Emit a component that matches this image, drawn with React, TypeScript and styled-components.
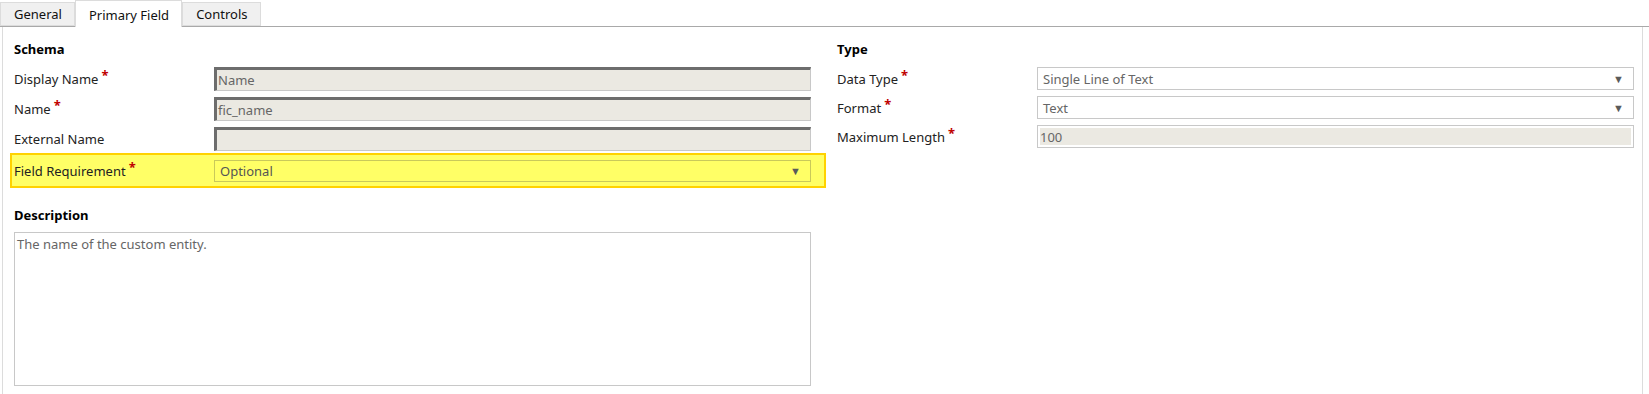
import React from 'react'
import styled, { createGlobalStyle } from 'styled-components'

const GlobalStyle = createGlobalStyle`
    html, body { margin: 0; padding: 0; background: #fff; }
    body { font-family: "Noto Sans", "Open Sans", Arial, sans-serif; font-size: 13px; color: #222; }
`

const Page = styled.div`
    width: 1649px;
    height: 394px;
    overflow: hidden;
`

const TabStrip = styled.div`
    display: flex;
    align-items: flex-end;
    height: 27px;
    border-bottom: 1px solid #a9a9a9;
    box-sizing: border-box;
`

const Tab = styled.div<{ $active?: boolean }>`
    box-sizing: border-box;
    height: ${p => (p.$active ? '27px' : '24px')};
    margin-bottom: ${p => (p.$active ? '-1px' : '0')};
    padding: ${p => (p.$active ? '1px' : '0')} 12px 0 13px;
    display: flex;
    align-items: center;
    background: ${p => (p.$active ? '#fff' : '#f0f0f0')};
    border: 1px solid #dcdcdc;
    border-bottom: ${p => (p.$active ? 'none' : '1px solid #dcdcdc')};
    color: #111;
    font-size: 13px;
`

const Panel = styled.div`
    margin-left: 2px;
    width: 1641px;
    height: 367px;
    box-sizing: border-box;
    border-left: 1px solid #dcdcdc;
    border-right: 1px solid #dcdcdc;
    padding: 0 8px 0 11px;
    display: grid;
    grid-template-columns: 797px 797px;
    column-gap: 26px;
    align-items: start;
`

const Column = styled.div`
    display: flex;
    flex-direction: column;
`

const Heading = styled.div<{ $top?: number }>`
    font-weight: 700;
    font-size: 13px;
    line-height: 20px;
    color: #000;
    margin-top: ${p => p.$top ?? 12}px;
    margin-bottom: ${p => (p.$top ? 7 : 8)}px;
`

const Rows = styled.div<{ $gap: number }>`
    display: flex;
    flex-direction: column;
    gap: ${p => p.$gap}px;
`

const Row = styled.div<{ $h: number }>`
    display: flex;
    align-items: center;
    height: ${p => p.$h}px;
`

const Highlight = styled.div`
    display: flex;
    align-items: center;
    height: 35px;
    box-sizing: border-box;
    margin: 2px -15px 0 -4px;
    padding: 0 13px 0 2px;
    background: #ffff66;
    border: 2px solid #ffd200;
`

const Label = styled.div`
    width: 200px;
    flex: none;
    color: #222;
    white-space: nowrap;
`

const Req = styled.span`
    color: #c00000;
    font-weight: 700;
    position: relative;
    top: -4px;
    margin-left: 3px;
    font-size: 13px;
`

const ReadOnly = styled.div`
    flex: 1;
    height: 24px;
    box-sizing: border-box;
    background: #ebe9e2;
    border-top: 3px solid #6d6d6d;
    border-left: 3px solid #6d6d6d;
    border-right: 1px solid #c8c8c8;
    border-bottom: 1px solid #c8c8c8;
    color: #666;
    display: flex;
    align-items: center;
    padding-left: 1px;
`

const Select = styled.div<{ $tint?: boolean; $h: number }>`
    flex: 1;
    height: ${p => p.$h}px;
    box-sizing: border-box;
    border: 1px solid ${p => (p.$tint ? '#c9c95a' : '#c8c8c8')};
    background: ${p => (p.$tint ? 'transparent' : '#fff')};
    color: ${p => (p.$tint ? '#555' : '#666')};
    display: flex;
    align-items: center;
    justify-content: space-between;
    padding: 0 9px 0 5px;
`

const Arrow = styled.span`
    font-size: 11px;
    color: #5a5a5a;
    line-height: 1;
`

const Boxed = styled.div`
    flex: 1;
    height: 23px;
    box-sizing: border-box;
    border: 1px solid #c8c8c8;
    background: #ebe9e2;
    box-shadow: inset 0 0 0 2px #fff;
    color: #666;
    display: flex;
    align-items: center;
    padding-left: 2px;
`

const TextArea = styled.div`
    height: 154px;
    box-sizing: border-box;
    border: 1px solid #c8c8c8;
    color: #666;
    padding: 2px 2px;
`

const App = () => {
    return <Page>
        <GlobalStyle />
        <TabStrip>
            <Tab>General</Tab>
            <Tab $active>Primary Field</Tab>
            <Tab>Controls</Tab>
        </TabStrip>
        <Panel>
            <Column>
                <Heading>Schema</Heading>
                <Rows $gap={6}>
                    <Row $h={24}>
                        <Label>Display Name<Req>*</Req></Label>
                        <ReadOnly>Name</ReadOnly>
                    </Row>
                    <Row $h={24}>
                        <Label>Name<Req>*</Req></Label>
                        <ReadOnly>fic_name</ReadOnly>
                    </Row>
                    <Row $h={24}>
                        <Label>External Name</Label>
                        <ReadOnly />
                    </Row>
                </Rows>
                <Highlight>
                    <Label>Field Requirement<Req>*</Req></Label>
                    <Select $tint $h={22}>Optional<Arrow>▼</Arrow></Select>
                </Highlight>
                <Heading $top={17}>Description</Heading>
                <TextArea>The name of the custom entity.</TextArea>
            </Column>
            <Column>
                <Heading>Type</Heading>
                <Rows $gap={6}>
                    <Row $h={23}>
                        <Label>Data Type<Req>*</Req></Label>
                        <Select $h={23}>Single Line of Text<Arrow>▼</Arrow></Select>
                    </Row>
                    <Row $h={23}>
                        <Label>Format<Req>*</Req></Label>
                        <Select $h={23}>Text<Arrow>▼</Arrow></Select>
                    </Row>
                    <Row $h={23}>
                        <Label>Maximum Length<Req>*</Req></Label>
                        <Boxed>100</Boxed>
                    </Row>
                </Rows>
            </Column>
        </Panel>
    </Page>
}

export default App
